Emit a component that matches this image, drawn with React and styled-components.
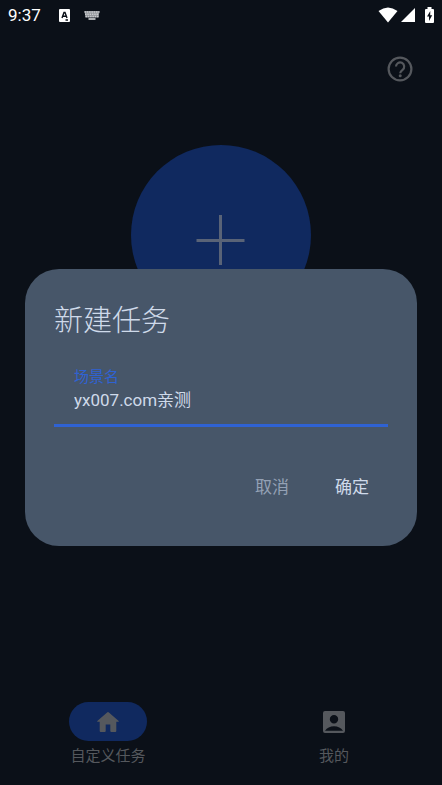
import React, {useState} from 'react';
import styled, {createGlobalStyle} from 'styled-components';

const colors = {
    background: '#0b1018',
    primary: '#2f62d3',
    primaryDimmed: '#10295f',
    dimmed: '#55585d',
    surface: '#475669',
    text: '#cfdaea',
    textMuted: '#94a1b5',
};

const GlobalStyle = createGlobalStyle`
    * {
        box-sizing: border-box;
    }

    body {
        margin: 0;
        background: ${colors.background};
        font-family: Roboto, "Noto Sans CJK SC", sans-serif;
    }

    button, input {
        font-family: inherit;
    }
`;

const Page = styled.div`
    display: flex;
    flex-direction: column;
    min-height: 100vh;
    background: ${colors.background};
`;

const StatusBar = styled.header`
    display: flex;
    align-items: center;
    justify-content: space-between;
    height: 30px;
    padding: 0 8px;
    color: #fff;
`;

const StatusGroup = styled.div`
    display: flex;
    align-items: center;
    gap: ${({$gap}) => $gap}px;
`;

const Clock = styled.time`
    margin-right: 4px;
    font-size: 17px;
    line-height: 20px;
    font-weight: 400;
`;

const Toolbar = styled.div`
    display: flex;
    justify-content: flex-end;
    padding: 24px 27px 0;
`;

const IconButton = styled.button`
    display: flex;
    padding: 0;
    border: 0;
    background: none;
    color: ${colors.dimmed};
    cursor: pointer;
`;

const Main = styled.main`
    display: flex;
    flex: 1;
    flex-direction: column;
    align-items: center;
    padding-top: 61px;
`;

const AddButton = styled.button`
    display: flex;
    align-items: center;
    justify-content: center;
    width: 180px;
    height: 180px;
    padding: 10px 0 0;
    border: 0;
    border-radius: 50%;
    background: ${colors.primaryDimmed};
    color: #596377;
    cursor: pointer;
`;

const BottomNav = styled.nav`
    display: grid;
    grid-template-columns: 1fr 1fr;
    gap: 10px;
    padding-bottom: 18px;
`;

const NavItem = styled.a`
    display: flex;
    flex-direction: column;
    align-items: center;
    gap: 4px;
    color: ${colors.dimmed};
    font-size: 15px;
    line-height: 22px;
    text-decoration: none;
`;

const NavIndicator = styled.span`
    display: flex;
    align-items: center;
    justify-content: center;
    width: 78px;
    height: 39px;
    border-radius: 20px;
    background: ${({$active}) => $active ? colors.primaryDimmed : 'transparent'};
`;

const Overlay = styled.div`
    position: fixed;
    inset: 30px 0 0;
    display: flex;
    align-items: center;
    justify-content: center;
    padding: 0 25px;
`;

const Dialog = styled.form`
    width: 100%;
    padding: 31px 29px 35px;
    border-radius: 34px;
    background: ${colors.surface};
    color: ${colors.text};
`;

const Title = styled.h2`
    margin: 0 0 18px;
    font-size: 29px;
    line-height: 42px;
    font-weight: 300;
`;

const Field = styled.label`
    display: block;
    padding: 6px 20px 12px;
    border-bottom: 3px solid ${colors.primary};
`;

const FieldLabel = styled.span`
    display: block;
    color: ${colors.primary};
    font-size: 15px;
    line-height: 22px;
`;

const FieldInput = styled.input`
    display: block;
    width: 100%;
    height: 24px;
    padding: 0;
    border: 0;
    outline: 0;
    background: none;
    color: ${colors.text};
    font-size: 17px;
    line-height: 24px;
`;

const Actions = styled.div`
    display: flex;
    justify-content: flex-end;
    gap: 8px;
    padding-top: 35px;
`;

const TextButton = styled.button`
    height: 49px;
    padding: 0 19px;
    border: 0;
    background: none;
    color: ${({$muted}) => $muted ? colors.textMuted : colors.text};
    font-size: 17px;
    line-height: 24px;
    cursor: pointer;
`;

const LanguageIcon = () =>
    <svg width="11" height="13" viewBox="0 0 11 13" aria-hidden="true">
        <rect width="11" height="13" rx="1" fill="#fff"/>
        <path d="M3 9 5 3.500h1L8 9M4 7.200h3M6.500 11H9" fill="none" stroke={colors.background} strokeWidth="1.4"/>
    </svg>

const KeyboardIcon = () =>
    <svg width="16" height="9" viewBox="0 0 16 9" aria-hidden="true">
        <path d="M.5 0h15l-1 6.500h-13z" fill="#8f9297"/>
        <path d="M.5 1h15M1 3.200h14M1.500 5.500h13" fill="none" stroke="#c9cbce" strokeWidth="1.400" strokeDasharray="1.500 .8"/>
        <path d="M4.500 8h7" stroke="#d5d7da" strokeWidth="1.600"/>
    </svg>

const WifiIcon = () =>
    <svg width="20" height="16" viewBox="0 0 20 16" aria-hidden="true">
        <path d="M.5 4Q10-3 19.500 4L10 15.500z" fill="currentColor"/>
    </svg>

const SignalIcon = () =>
    <svg width="14" height="14" viewBox="0 0 14 14" aria-hidden="true">
        <path d="M14 0v14H0z" fill="currentColor"/>
    </svg>

const BatteryIcon = () =>
    <svg width="9" height="16" viewBox="0 0 9 16" aria-hidden="true">
        <path d="M2.500 0h4v2H8q1 0 1 1v12q0 1-1 1H1q-1 0-1-1V3q0-1 1-1h1.500z" fill="currentColor"/>
        <path d="M5.300 4 2 9.500h2V14l3.200-5.800h-2z" fill={colors.background}/>
    </svg>

const HelpIcon = () =>
    <svg width="30" height="30" viewBox="0 0 30 30" fill="none" stroke="currentColor" strokeWidth="2.2" aria-hidden="true">
        <circle cx="15" cy="15" r="11.400"/>
        <path d="M11 12.600a4.100 4.100 0 1 1 6.600 3.200c-1.500 1.200-2.400 1.800-2.400 3.400"/>
        <circle cx="15.200" cy="21.700" r="1.500" fill="currentColor" stroke="none"/>
    </svg>

const PlusIcon = () =>
    <svg width="50" height="52" viewBox="0 0 50 52" aria-hidden="true">
        <path d="M24.500 1v50M.5 26.500h48" stroke="currentColor" strokeWidth="3"/>
    </svg>

const HomeIcon = () =>
    <svg width="24" height="22" viewBox="0 0 24 22" aria-hidden="true">
        <path
            d="M9.700 20v-6.400h4.600V20q0 1 1 1h4q1 0 1-1v-9.300h2.100q.9 0 .3-.7L12.900 1.400q-.9-.8-1.800 0L1.300 10q-.6.700.3.700h2.100V20q0 1 1 1h4q1 0 1-1z"
            fill="currentColor"
        />
    </svg>

const AccountIcon = () =>
    <svg width="22" height="22" viewBox="0 0 22 22" aria-hidden="true">
        <path
            fillRule="evenodd"
            d="M2 0h18q2 0 2 2v18q0 2-2 2H2q-2 0-2-2V2Q0 0 2 0zM11 4a4.200 4.200 0 1 0 0 8.400A4.200 4.200 0 1 0 11 4zM2 19.700h18Q17 15.200 11 15.200T2 19.700z"
            fill="currentColor"
        />
    </svg>

const navItems = [
    {id: 'custom', label: '自定义任务', Icon: HomeIcon},
    {id: 'mine', label: '我的', Icon: AccountIcon},
];

const NewTaskDialog = () => {
    const [name, setName] = useState('yx007.com亲测');

    return <Overlay>
        <Dialog role="dialog" aria-labelledby="dialog-title" onSubmit={e => e.preventDefault()}>
            <Title id="dialog-title">新建任务</Title>
            <Field htmlFor="scene-name">
                <FieldLabel>场景名</FieldLabel>
                <FieldInput id="scene-name" type="text" value={name} onChange={e => setName(e.target.value)}/>
            </Field>
            <Actions>
                <TextButton type="button" $muted>取消</TextButton>
                <TextButton type="submit">确定</TextButton>
            </Actions>
        </Dialog>
    </Overlay>
}

export default () => {
    const [active, setActive] = useState('custom');

    return <Page>
        <GlobalStyle/>
        <StatusBar>
            <StatusGroup $gap={14}>
                <Clock>9:37</Clock>
                <LanguageIcon/>
                <KeyboardIcon/>
            </StatusGroup>
            <StatusGroup $gap={10}>
                <StatusGroup $gap={3}>
                    <WifiIcon/>
                    <SignalIcon/>
                </StatusGroup>
                <BatteryIcon/>
            </StatusGroup>
        </StatusBar>
        <Toolbar>
            <IconButton type="button" aria-label="帮助"><HelpIcon/></IconButton>
        </Toolbar>
        <Main>
            <AddButton type="button" aria-label="新建任务"><PlusIcon/></AddButton>
        </Main>
        <BottomNav>
            {navItems.map(({id, label, Icon}) =>
                <NavItem key={id} href={`#${id}`} onClick={() => setActive(id)}>
                    <NavIndicator $active={id === active}><Icon/></NavIndicator>
                    {label}
                </NavItem>
            )}
        </BottomNav>
        <NewTaskDialog/>
    </Page>
}
